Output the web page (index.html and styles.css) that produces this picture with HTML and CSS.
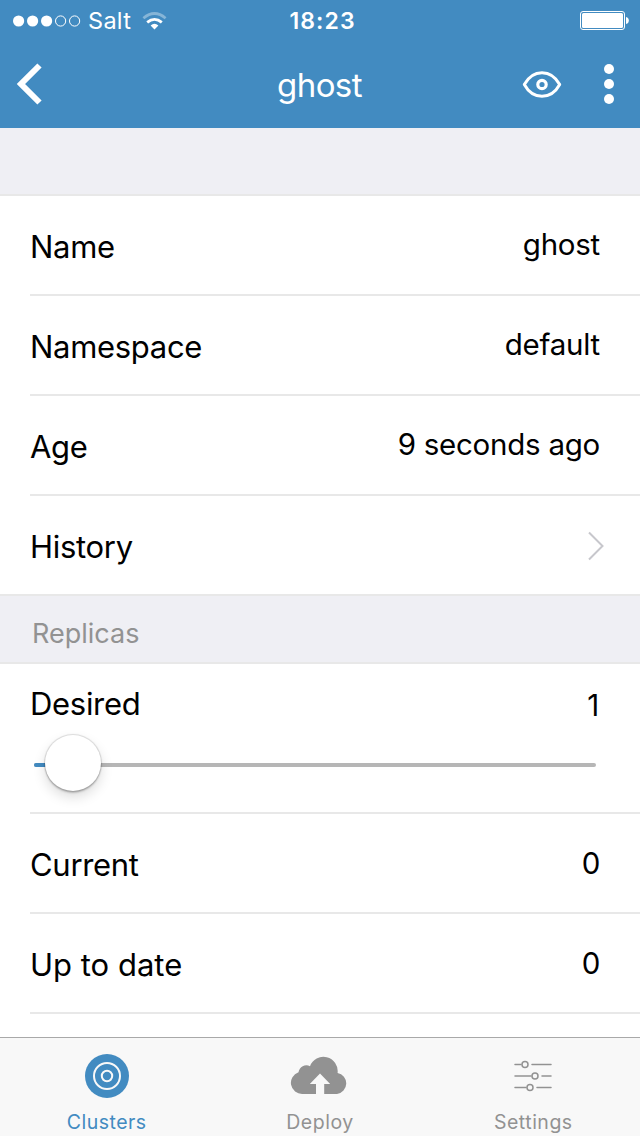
FILE: index.html
```html
<!DOCTYPE html>
<html lang="en">
<head>
<meta charset="utf-8">
<title>ghost</title>
<link rel="stylesheet" href="styles.css">
</head>
<body>
<div class="app">
  <header class="header">
    <div class="status">
      <div class="carrier">
        <svg class="signal" width="68" height="12" viewBox="0 0 68 12"><g fill="#fff"><circle cx="5.6" cy="6" r="5.6"/><circle cx="19.6" cy="6" r="5.6"/><circle cx="33.6" cy="6" r="5.6"/></g><g fill="none" stroke="#fff"><circle cx="47.6" cy="6" r="5.1"/><circle cx="61.6" cy="6" r="5.1"/></g></svg>
        <span class="carrier-name">Salt</span>
        <svg class="wifi" width="26" height="20" viewBox="0 0 26 20"><path d="M12.5 18.5 8.6 14.5Q12.5 11.2 16.4 14.5Z" fill="#fff"/><path d="M5.2 11.4Q12.5 5.4 19.8 11.4" fill="none" stroke="#fff" stroke-width="2.8"/><path d="M1.4 7.2Q12.5 -2.1 23.6 7.2" fill="none" stroke="#fff" stroke-opacity=".36" stroke-width="2.8"/></svg>
      </div>
      <span class="clock">18:23</span>
      <svg class="battery" width="50" height="20" viewBox="0 0 50 20"><rect x=".5" y=".5" width="44" height="18" rx="2.5" fill="none" stroke="#fff"/><rect x="2" y="2" width="41" height="15" rx="1.5" fill="#fff"/><path d="M46 6Q48.8 6.5 48.8 9.5T46 13Z" fill="#fff"/></svg>
    </div>
    <div class="nav">
      <svg class="back" width="30" height="46" viewBox="0 0 30 46"><path d="M24.5 4.5 6 23 24.5 41.5" fill="none" stroke="#fff" stroke-width="6"/></svg>
      <h1 class="title">ghost</h1>
      <div class="actions">
        <svg width="40" height="30" viewBox="0 0 40 30"><path d="M2.3 14.5C11 -1.2 29 -1.2 37.7 14.5 29 30.2 11 30.2 2.3 14.5Z" fill="none" stroke="#fff" stroke-width="3" stroke-linejoin="round"/><circle cx="20" cy="14.5" r="4.2" fill="none" stroke="#fff" stroke-width="3.2"/></svg>
        <svg width="10" height="42" viewBox="0 0 10 42"><g fill="#fff"><circle cx="5" cy="5" r="5"/><circle cx="5" cy="20" r="5"/><circle cx="5" cy="35" r="5"/></g></svg>
      </div>
    </div>
  </header>
  <main class="content">
    <div class="section"></div>
    <div class="row"><span class="label">Name</span><span class="value">ghost</span></div>
    <div class="row"><span class="label">Namespace</span><span class="value">default</span></div>
    <div class="row"><span class="label">Age</span><span class="value">9 seconds ago</span></div>
    <div class="row last"><span class="label">History</span><svg class="chevron" width="18" height="30" viewBox="0 0 18 30"><path d="M2 1.5 15.5 15 2 28.5" fill="none" stroke="#c7c7cc" stroke-width="2"/></svg></div>
    <div class="section"><h2 class="section-title">Replicas</h2></div>
    <div class="row slider-row">
      <div class="slider-head"><span class="label">Desired</span><span class="value">1</span></div>
      <div class="slider"><div class="fill"></div><div class="knob"></div></div>
    </div>
    <div class="row"><span class="label">Current</span><span class="value digit">0</span></div>
    <div class="row"><span class="label wide">Up to date</span><span class="value digit">0</span></div>
  </main>
  <nav class="tabs">
    <a class="tab active">
      <svg width="60" height="46" viewBox="0 0 60 46"><circle cx="30" cy="23" r="22" fill="#428bc1"/><g fill="none" stroke="#f8f8f8" stroke-width="2"><circle cx="30" cy="23" r="13"/><circle cx="30" cy="23" r="5.2"/></g></svg>
      <span>Clusters</span>
    </a>
    <a class="tab">
      <svg width="60" height="46" viewBox="0 0 60 46"><path d="M12.5 41A11.2 11.2 0 0 1 8.5 19.2 8 8 0 0 1 20 13.2 14.3 14.3 0 0 1 47.6 19.9 10.7 10.7 0 0 1 47 41H34.2V31H40.2L30 20.5 19.8 31H26V41Z" fill="#929292"/></svg>
      <span>Deploy</span>
    </a>
    <a class="tab">
      <svg width="60" height="46" viewBox="0 0 60 46"><g fill="none" stroke="#929292" stroke-width="1.5" stroke-linecap="round"><path d="M12 11.5H18M29 11.5H48M12 23H28M39 23H48M12 34.5H23M34 34.5H48"/><circle cx="22" cy="11.5" r="3"/><circle cx="32" cy="23" r="3"/><circle cx="27" cy="34.5" r="3"/></g></svg>
      <span>Settings</span>
    </a>
  </nav>
</div>
</body>
</html>
```
FILE: styles.css
```css
* { box-sizing: border-box; }
body { margin: 0; font-family: Inter, Roboto, sans-serif; color: #000; background: #fff; }
svg { display: block; flex: none; }
.app { width: 640px; height: 1136px; display: flex; flex-direction: column; overflow: hidden; }

.header { height: 128px; flex: none; background: #428bc1; color: #fff; }
.status { height: 41px; display: grid; grid-template-columns: 1fr auto 1fr; align-items: center; padding: 0 10px 0 13px; }
.carrier { display: flex; align-items: center; }
.carrier-name { font-size: 23.5px; margin-left: 7px; line-height: 28px; letter-spacing: .3px; }
.wifi { margin: 0 0 0 10.5px; }
.clock { font-size: 23px; font-weight: 600; line-height: 28px; letter-spacing: 1.1px; margin-left: 2px; }
.battery { justify-self: end; }
.nav { height: 87px; display: grid; grid-template-columns: 1fr auto 1fr; align-items: center; padding: 0 26px 0 15px; }
.back { margin-top: -1px; }
.title { margin: 0 0 0 10px; font-size: 33px; font-weight: 400; line-height: 40px; letter-spacing: -.6px; }
.actions { display: flex; justify-content: flex-end; align-items: center; gap: 42px; }

.content { flex: 1; min-height: 0; overflow: hidden; }
.section { height: 68px; padding: 9px 32px 0; background: #efeff4; border-bottom: 2px solid #e8e8e8; display: flex; align-items: center; }
.section-title { margin: 0; font-size: 27px; font-weight: 400; line-height: 34px; color: #929292; }
.row { height: 100px; margin-left: 30px; padding-right: 40px; border-bottom: 2px solid #e8e8e8; display: flex; justify-content: space-between; align-items: center; }
.row.last { margin-left: 0; padding-left: 30px; padding-right: 35px; }
.label { font-size: 31px; line-height: 40px; padding-top: 4px; letter-spacing: -.3px; }
.label.wide { letter-spacing: 0; }
.value { font-size: 29.5px; line-height: 40px; padding-bottom: 2px; letter-spacing: -.25px; }
.value.digit { padding-bottom: 1px; }
.chevron { margin-top: 1px; }
.slider-row { height: 150px; display: block; }
.slider-head { display: flex; justify-content: space-between; align-items: center; height: 62px; padding-top: 18px; }
.slider-head .label { padding: 0; }
.slider-head .value { padding: 1px 1px 0 0; }
.slider { height: 4px; margin: 37px 4px 0; background: #b6b6b6; border-radius: 2px; display: flex; align-items: center; }
.fill { width: 11px; height: 4px; background: #428bc1; border-radius: 2px 0 0 2px; }
.knob { width: 56px; height: 56px; flex: none; margin-top: -4px; border-radius: 50%; background: #fff; box-shadow: 0 0 1px 1px rgba(0,0,0,.13), 0 2px 2px rgba(0,0,0,.2), 0 6px 13px rgba(0,0,0,.14); }

.tabs { height: 99px; flex: none; display: grid; grid-template-columns: repeat(3, 1fr); background: #f8f8f8; border-top: 1px solid #a9a9a9; }
.tab { display: flex; flex-direction: column; align-items: center; padding-top: 15px; color: #929292; font-size: 19.5px; line-height: 24px; letter-spacing: .5px; }
.tab span { margin-top: 11px; }
.tab.active { color: #428bc1; }
```
